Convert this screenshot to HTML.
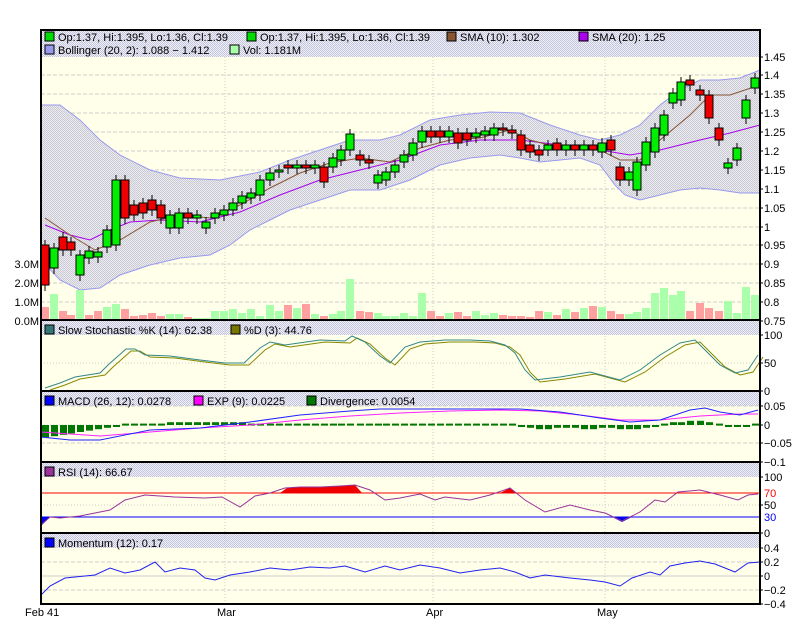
<!DOCTYPE html>
<html><head><meta charset="utf-8"><style>
html,body{margin:0;padding:0;background:#fff;width:800px;height:640px;overflow:hidden}
svg{display:block;font-family:"Liberation Sans",Arial,sans-serif;font-size:11px}
</style></head><body>
<svg id="s" width="800" height="640" xmlns="http://www.w3.org/2000/svg">
<defs>
<pattern id="h" width="2" height="2" patternUnits="userSpaceOnUse"><rect width="2" height="2" fill="#f0f0f8"/><rect width="1" height="1" fill="#c4c4dc"/><rect x="1" y="1" width="1" height="1" fill="#c4c4dc"/></pattern>
<pattern id="b" width="2" height="2" patternUnits="userSpaceOnUse"><rect width="2" height="2" fill="#ececf0"/><rect width="1" height="1" fill="#cacad4"/><rect x="1" y="1" width="1" height="1" fill="#cacad4"/></pattern>
</defs>
<g id="g"></g>
</svg>
<script>
var g=document.getElementById('g'),o='';
function R(x,y,w,h,f,s){o+='<rect x="'+x+'" y="'+y+'" width="'+w+'" height="'+h+'" fill="'+f+'"'+(s?' stroke="'+s+'"':'')+'/>';}
function L(x1,y1,x2,y2,c,w,d){o+='<line x1="'+x1+'" y1="'+y1+'" x2="'+x2+'" y2="'+y2+'" stroke="'+c+'" stroke-width="'+(w||1)+'"'+(d?' stroke-dasharray="'+d+'"':'')+'/>';}
function P(pts,c,w){o+='<polyline fill="none" stroke="'+c+'" stroke-width="'+(w||1)+'" points="'+pts.map(function(p){return p.join(',')}).join(' ')+'"/>';}
function T(x,y,t,c,a){o+='<text x="'+x+'" y="'+y+'" fill="'+(c||'#000')+'"'+(a?' text-anchor="'+a+'"':'')+'>'+t+'</text>';}
var X0=41,X1=760;
var panels=[[30,320],[320,391],[391,462],[462,533],[533,604]];
panels.forEach(function(p){R(X0,p[0],X1-X0,p[1]-p[0],'#ffffea');});
R(X0,31,X1-X0,26,'url(#h)');[321,392,463,534].forEach(function(y){R(X0,y,X1-X0,14,'url(#h)');});
[75,94,113,132,151,170,189,208,227,245,264,283,302].forEach(function(y){L(X0,y,X1,y,'#cccccc',1,'4,2');});
[363].forEach(function(y){L(X0,y,X1,y,'#cccccc',1,'1,2');});
[406,443].forEach(function(y){L(X0,y,X1,y,'#cccccc',1,'4,2');});L(X0,425,X1,425,'#cccccc',1,'1,2');
[505].forEach(function(y){L(X0,y,X1,y,'#cccccc',1,'1,2');});
[562,590].forEach(function(y){L(X0,y,X1,y,'#cccccc',1,'4,2');});L(X0,576,X1,576,'#cccccc',1);
[225,433,605].forEach(function(x){L(x,57,x,604,'#cccccc',1,'1,2');});
var up=[[41,105],[60,105],[80,120],[100,140],[120,155],[150,170],[180,178],[220,180],[260,172],[290,160],[320,150],[350,140],[380,140],[400,135],[430,120],[460,115],[490,112],[520,113],[550,125],[580,135],[600,140],[620,135],[640,125],[660,105],[680,90],[700,80],[720,80],[740,78],[760,70]];
var lo=[[41,260],[60,280],[80,290],[100,288],[120,275],[150,265],[180,258],[210,255],[230,245],[250,230],[270,220],[290,210],[320,200],[350,190],[380,190],[410,180],[440,165],[470,158],[500,155],[520,158],[540,162],[560,160],[580,158],[600,165],[615,185],[625,195],[640,200],[660,195],[680,190],[700,188],[720,190],[740,193],[760,193]];
o+='<polygon fill="url(#b)" points="'+up.concat(lo.slice().reverse()).map(function(p){return p.join(',')}).join(' ')+'"/>';
P(up,'#9999ee');P(lo,'#9999ee');
var cx=[45,54,63,71,80,89,98,107,116,125,134,143,152,161,170,179,188,197,206,215,224,233,242,251,260,270,279,288,297,306,315,324,333,341,350,360,369,378,386,395,404,413,422,431,440,449,458,467,476,485,494,503,512,521,530,539,548,557,566,575,584,593,602,611,620,629,637,646,655,664,673,681,690,700,709,719,728,737,746,755];
var vh=[14,27,10,6,31,6,10,14,17,12,5,6,8,5,7,7,4,3,3,10,10,12,8,12,5,16,10,16,13,17,7,5,7,10,42,10,9,8,5,5,8,5,28,10,5,8,9,5,10,6,8,6,5,5,4,10,9,6,12,9,13,15,14,10,7,7,9,13,28,33,26,30,10,18,13,10,20,8,34,26];
var vc=[0,1,0,0,1,0,0,1,1,0,0,0,0,0,1,1,0,1,1,1,1,1,1,1,1,1,1,0,1,0,1,0,1,1,1,0,0,1,1,1,1,1,1,0,0,1,0,0,1,1,1,0,0,0,0,0,1,0,1,0,1,0,1,0,0,1,1,1,1,1,1,1,0,0,0,0,1,1,1,1];
cx.forEach(function(x,i){R(x-4,321-vh[i],8,vh[i],vc[i]?'#aaffaa':'#ff9f9f');});
P([[45,225],[70,235],[90,240],[110,230],[130,222],[160,220],[200,222],[240,212],[280,195],[320,180],[360,170],[400,160],[440,145],[480,140],[520,140],[560,145],[600,150],[630,155],[660,150],[700,140],[730,133],[760,125]],'#aa00ee');
P([[45,218],[70,235],[95,250],[120,240],[150,222],[180,215],[210,218],[240,205],[270,188],[300,173],[330,163],[360,158],[390,162],[420,148],[450,140],[480,138],[510,130],[530,140],[560,148],[600,150],[620,160],[640,160],[660,140],[690,115],[710,95],[730,95],[760,85]],'#885533');
var cd=[[245,285,0],[248,268,1],[237,250,0],[242,250,0],[255,275,1],[251,258,1],[252,257,1],[230,247,1],[180,245,1],[180,218,0],[205,215,0],[203,213,0],[200,210,0],[205,218,0],[215,228,1],[213,228,1],[213,218,0],[215,218,1],[222,228,1],[213,218,1],[210,215,1],[203,210,1],[196,203,1],[193,198,1],[180,195,1],[173,180,1],[170,172,1],[165,168,0],[165,168,1],[165,168,0],[165,168,1],[167,182,0],[158,167,1],[150,160,1],[134,150,1],[155,160,0],[160,163,0],[175,183,1],[172,180,1],[165,172,1],[155,162,1],[143,155,1],[131,142,1],[131,137,0],[131,137,0],[131,137,1],[133,143,0],[133,140,0],[133,137,1],[131,135,1],[128,135,1],[128,130,0],[130,133,0],[135,150,0],[145,152,0],[150,155,0],[145,150,1],[143,150,0],[145,150,1],[145,150,0],[145,150,1],[145,150,0],[143,152,1],[140,150,0],[167,180,0],[172,180,1],[162,190,1],[142,165,1],[128,152,1],[115,135,1],[93,103,1],[82,100,1],[80,85,0],[90,95,0],[95,118,0],[128,140,0],[163,168,1],[148,160,1],[100,118,1],[78,88,1]];
cd.forEach(function(c,i){var x=cx[i];L(x,c[0]-5,x,c[1]+6,'#000');R(x-4,c[0],8,Math.max(2,c[1]-c[0]),c[2]?'#00ee00':'#ee0000','#000');});
var K=[[45,388],[60,383],[75,377],[100,373],[108,365],[126,349],[135,349],[145,355],[170,356],[200,360],[225,363],[244,363],[260,348],[270,342],[285,345],[320,340],[345,341],[352,336],[365,342],[380,356],[390,363],[405,347],[420,342],[445,340],[470,340],[490,341],[505,345],[515,353],[525,370],[535,380],[560,377],[590,372],[605,376],[620,380],[640,370],[660,355],[680,343],[695,340],[705,350],[720,365],[735,373],[748,370],[758,355]];
P(K.map(function(p){return [p[0]+5,p[1]+2]}),'#888800');P(K,'#338888');
var dv=[-9,-8,-7,-6,-5,-4,-3,-2,-1,1,1,1,1,1,2,2,2,2,2,2,2,2,2,1,1,1,1,1,1,1,1,1,1,1,1,1,1,1,1,1,1,1,1,1,1,1,1,1,1,1,1,1,1,-1,-2,-3,-3,-2,-2,-2,-3,-3,-2,-2,-3,-3,-3,-2,-1,1,2,2,3,3,2,1,-1,-1,0,1];
cx.forEach(function(x,i){var h=dv[i]*1.4;R(x-3,h<0?425:425-h,7,Math.max(2,Math.abs(h)),'#007700');});
P([[41,432],[100,436],[150,432],[200,428],[250,425],[300,420],[350,416],[400,413],[450,411],[500,410],[540,411],[580,415],[620,420],[660,420],[700,416],[740,414],[758,414]],'#ff22ff');
P([[41,437],[70,440],[100,440],[150,430],[200,428],[250,422],[300,415],[350,411],[380,409],[430,409],[480,409],[520,409],[560,412],[600,418],[630,422],[660,420],[690,410],[705,408],[720,412],[740,415],[758,410]],'#2222ff');
L(X0,493,X1,493,'#ff0000');L(X0,517,X1,517,'#0000ff');
o+='<polygon fill="#ee0000" points="280,493 287,488 300,487 320,487 340,486 355,485 362,493"/><polygon fill="#ee0000" points="500,493 510,488 516,493"/><polygon fill="#0000ee" points="41,517 41,526 50,517"/><polygon fill="#0000ee" points="612,517 622,522 632,517"/>';
P([[41,525],[50,517],[60,518],[80,516],[110,510],[125,500],[145,495],[175,497],[205,498],[222,497],[240,507],[255,496],[270,493],[285,488],[300,487],[320,487],[340,486],[355,485],[370,490],[385,500],[400,498],[420,494],[435,500],[445,497],[470,500],[490,495],[510,488],[525,500],[545,512],[570,505],[590,510],[605,513],[622,521],[640,512],[655,500],[665,502],[678,492],[700,490],[720,495],[738,500],[748,495],[758,494]],'#993399');
P([[41,595],[50,586],[65,578],[95,575],[110,568],[125,573],[140,570],[155,562],[165,572],[180,568],[195,570],[205,578],[215,580],[230,575],[250,572],[270,568],[290,570],[310,567],[330,568],[345,566],[365,572],[385,566],[400,570],[420,565],[440,568],[460,573],[480,570],[500,568],[515,572],[530,578],[545,575],[570,578],[590,580],[605,582],[620,586],[632,578],[650,572],[660,575],[670,566],[685,563],[700,561],[715,564],[735,572],[748,563],[760,562]],'#2222ee');
L(X0,30,X0,604,'#000',2);L(X1,30,X1,604,'#000',2);[30,320,391,462,533,604].forEach(function(y){L(X0-1,y,X1+1,y,'#000',2);});
function lg(x,y,c,t){R(x,y-9,9,9,c,'#000');T(x+13,y,t);}
lg(45,41,'#00dd00','Op:1.37, Hi:1.395, Lo:1.36, Cl:1.39');lg(247,41,'#00dd00','Op:1.37, Hi:1.395, Lo:1.36, Cl:1.39');
lg(447,41,'#885533','SMA (10): 1.302');lg(579,41,'#aa00ee','SMA (20): 1.25');
lg(45,54,'#9999ee','Bollinger (20, 2): 1.088 − 1.412');lg(230,54,'#aaffaa','Vol: 1.181M');
lg(45,334,'#337777','Slow Stochastic %K (14): 62.38');lg(231,334,'#777700','%D (3): 44.76');
lg(45,405,'#0000ff','MACD (26, 12): 0.0278');lg(194,405,'#ff00ff','EXP (9): 0.0225');lg(307,405,'#007700','Divergence: 0.0054');
lg(45,476,'#993399','RSI (14): 66.67');lg(45,547,'#0000ff','Momentum (12): 0.17');
var ax=[[57,'1.45'],[75,'1.4'],[94,'1.35'],[113,'1.3'],[132,'1.25'],[151,'1.2'],[170,'1.15'],[189,'1.1'],[208,'1.05'],[227,'1'],[245,'0.95'],[264,'0.9'],[283,'0.85'],[302,'0.8'],[321,'0.75'],[335,'100'],[363,'50'],[391,'0'],[406,'0.05'],[425,'0'],[443,'−0.05'],[462,'−0.1'],[477,'100'],[505,'50'],[533,'0'],[548,'0.4'],[562,'0.2'],[576,'0'],[590,'−0.2'],[604,'−0.4']];
ax.forEach(function(a){T(764,a[0]+4,a[1]);L(760,a[0],763,a[0],'#000');});
T(764,497,'70','#ff0000');T(764,521,'30','#0000ff');
[[264,'3.0M'],[283,'2.0M'],[302,'1.0M'],[321,'0.0M']].forEach(function(a){T(39,a[0]+4,a[1],'#000','end');});
T(25,616,'Feb 41');T(217,616,'Mar');T(426,616,'Apr');T(597,616,'May');
g.innerHTML=o;
</script>
</body></html>
